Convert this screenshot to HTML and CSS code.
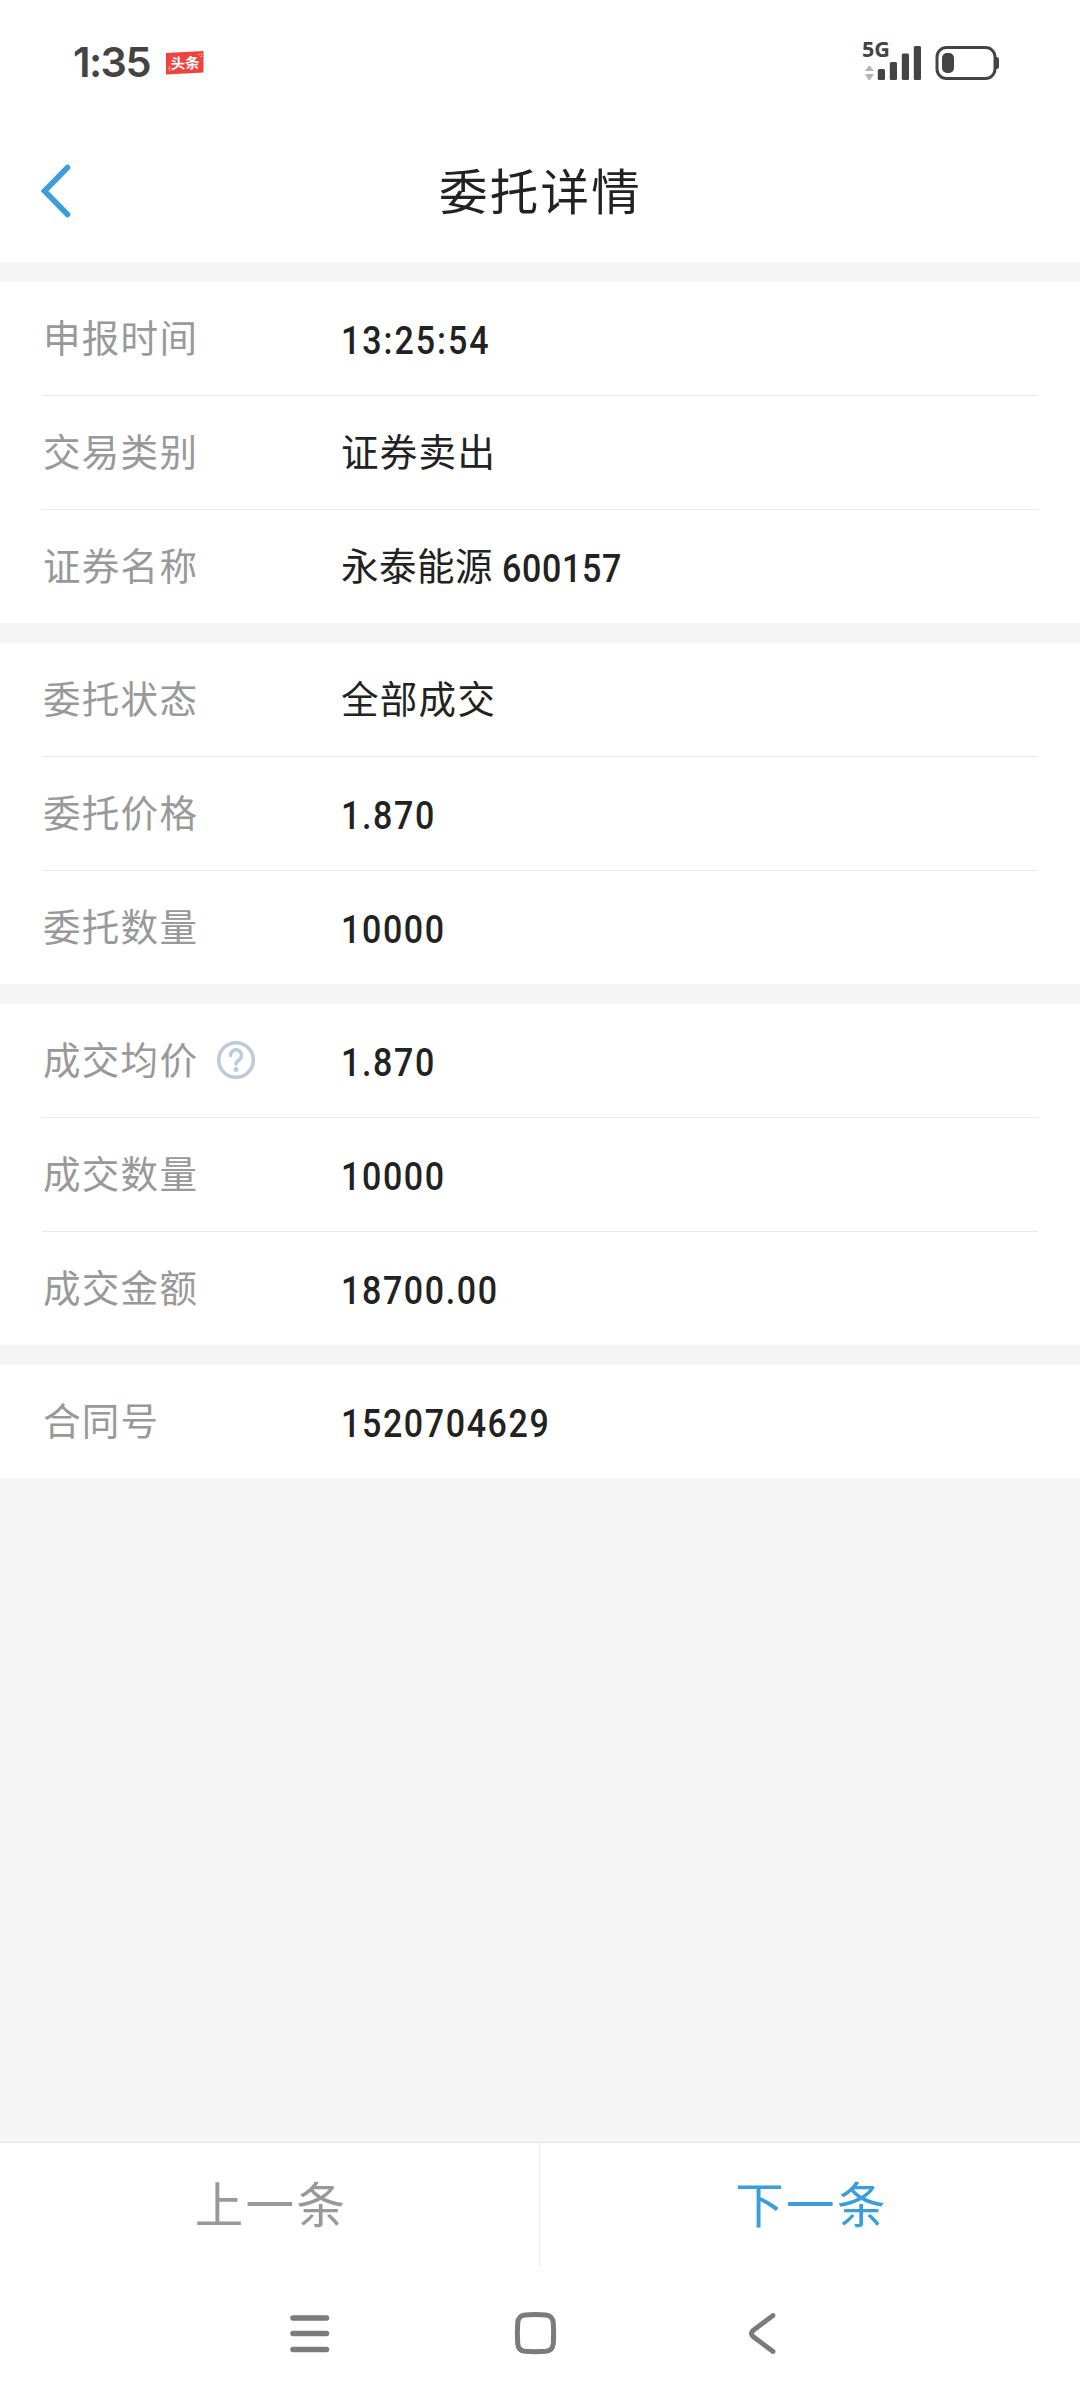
FILE: index.html
```html
<!DOCTYPE html>
<html lang="zh-CN">
<head>
<meta charset="utf-8">
<title>委托详情</title>
<link rel="stylesheet" href="styles.css">
</head>
<body>
<div class="screen">
  <div class="status">
    <span class="clock">1:35</span>
    <svg class="news" width="38" height="24" viewBox="0 0 38 24">
      <path d="M0 2 37.500 0V21.500L0 23.500Z" fill="#f04340"/>
      <path d="M32 3l2 1M34 6l2-1M35 2l1 2M2 17l2 1M3 20l2-1M3 15l1 2" stroke="#f9a07a" stroke-width="1.200"/>
      <text class="news-text" x="4.500" y="17.500" transform="rotate(-2 18 12)">头条</text>
    </svg>
    <svg class="signal" width="66" height="48" viewBox="-4 -2 66 48">
      <text class="signal-text" x="0" y="19" textLength="28" lengthAdjust="spacingAndGlyphs">5G</text>
      <path d="M3 33 6.500 28h1.500L12 33ZM3 36h9L8 42H6.500Z" fill="#b5b5b5"/>
      <g fill="#444">
        <rect x="15.800" y="31" width="7.200" height="11" rx="1.500"/>
        <rect x="27.800" y="24" width="7.200" height="18" rx="1.500"/>
        <rect x="39.800" y="15.500" width="7.200" height="26.500" rx="1.500"/>
        <rect x="51.800" y="8" width="7.200" height="34" rx="1.500"/>
      </g>
    </svg>
    <svg class="battery" width="66" height="36" viewBox="0 0 66 36">
      <rect x="2" y="2.500" width="58" height="31" rx="9.500" fill="none" stroke="#444" stroke-width="3"/>
      <rect x="7" y="8" width="12" height="20" rx="5" fill="#444"/>
      <path d="M60 12h1.500q2.500 0 2.500 2.500v7q0 2.500-2.500 2.500H60Z" fill="#444"/>
    </svg>
  </div>
  <header class="header">
    <svg class="back" width="34" height="56" viewBox="0 0 34 56">
      <path d="M29.500 4.500 6.500 28 29.500 51.500" fill="none" stroke="#3a9ddd" stroke-width="5.500" stroke-linecap="round"/>
    </svg>
    <h1 class="title">委托详情</h1>
  </header>
  <main class="content">
    <section class="group">
      <div class="row"><span class="label">申报时间</span><span class="num time">13:25:54</span></div>
      <div class="row"><span class="label">交易类别</span><span class="value">证券卖出</span></div>
      <div class="row"><span class="label">证券名称</span><span class="value name">永泰能源</span><span class="num code">600157</span></div>
    </section>
    <section class="group">
      <div class="row"><span class="label">委托状态</span><span class="value">全部成交</span></div>
      <div class="row"><span class="label">委托价格</span><span class="num">1.870</span></div>
      <div class="row"><span class="label">委托数量</span><span class="num">10000</span></div>
    </section>
    <section class="group">
      <div class="row"><span class="label">成交均价<svg class="help" width="40" height="40" viewBox="0 0 40 40">
        <circle cx="20" cy="20" r="17.300" fill="none" stroke="#bccbda" stroke-width="3.500"/>
        <path d="M14.500 15.500a5.500 5.500 0 1 1 8.500 4.500q-3 2-3 4" fill="none" stroke="#bccbda" stroke-width="3.500" stroke-linecap="round"/>
        <circle cx="20" cy="29.500" r="2.400" fill="#bccbda"/>
      </svg></span><span class="num">1.870</span></div>
      <div class="row"><span class="label">成交数量</span><span class="num">10000</span></div>
      <div class="row"><span class="label">成交金额</span><span class="num">18700.00</span></div>
    </section>
    <section class="group">
      <div class="row"><span class="label">合同号</span><span class="num">1520704629</span></div>
    </section>
  </main>
  <footer class="pager">
    <div class="page prev">上一条</div>
    <div class="page next">下一条</div>
  </footer>
  <nav class="nav">
    <svg width="540" height="56" viewBox="260 2305 540 56" fill="none" stroke="#7b7b7b" stroke-width="5.500" stroke-linecap="round" stroke-linejoin="round">
      <path d="M293 2318h33.500M293 2333.500h33.500M293 2349.500h33.500"/>
      <path d="M525 2315Q535.500 2314.200 546 2315Q552.500 2315.500 553.300 2323Q554 2333.500 553.300 2343.500Q552.500 2350.700 546 2351.300Q535.500 2352 525 2351.300Q518.300 2350.700 517.700 2343.500Q517 2333.500 517.700 2323Q518.300 2315.500 525 2315Z" stroke-width="5"/>
      <path d="M773 2315.500 753 2330.500Q750 2333.500 753 2336.500L773 2351.500" stroke-width="4.800"/>
    </svg>
  </nav>
</div>
</body>
</html>
```
FILE: styles.css
```css
* { box-sizing: border-box; }

body {
  margin: 0;
  background: #fff;
  font-family: "Noto Sans CJK SC", sans-serif;
  color: #222;
}

svg { display: block; flex: none; }

.screen {
  display: flex;
  flex-direction: column;
  width: 1080px;
  height: 2400px;
}

.status {
  display: flex;
  align-items: center;
  height: 127px;
  padding: 0 79px 1px 73px;
  color: #444;
}

.clock {
  width: 93px;
  font: 600 41.500px/1 Inter, sans-serif;
  letter-spacing: -1.600px;
}

.news-text {
  font: 700 14.500px "Noto Sans CJK SC", sans-serif;
  fill: #fff;
}

.signal { margin: -6px 11px 0 auto; }

.signal-text {
  font: 700 20.500px "Open Sans", sans-serif;
  fill: #444;
}

.header {
  display: grid;
  grid-template-columns: 72px 1fr 72px;
  align-items: center;
  height: 135px;
  padding-bottom: 11px;
}

.back { justify-self: end; margin-top: 4px; }

.title {
  margin: 0;
  padding-left: 1px;
  text-align: center;
  font-size: 48.500px;
  font-weight: 400;
  letter-spacing: 2.200px;
  line-height: 60px;
}

.content {
  display: flex;
  flex: 1;
  flex-direction: column;
  gap: 20px;
  padding-top: 20px;
  background: #f5f5f5;
}

.group {
  padding: 0 42px;
  background: #fff;
}

.row {
  display: flex;
  align-items: center;
  height: 113px;
  padding-bottom: 5px;
  font-size: 37.500px;
  letter-spacing: 1.300px;
  line-height: 54px;
}

.row + .row {
  height: 114px;
  border-top: 1px solid #e9e9e9;
}

.label {
  display: flex;
  align-items: center;
  gap: 18px;
  width: 299px;
  padding-left: 1px;
  color: #999;
}

.help { margin-top: 3px; }

.name { letter-spacing: 0.500px; margin-right: 9px; }

.num {
  padding-top: 9px;
  font-family: Roboto, sans-serif;
  font-size: 39.500px;
  font-weight: 500;
  letter-spacing: 1.900px;
  transform: scaleX(0.86);
  transform-origin: left center;
}

.time { letter-spacing: 2.300px; }
.code { letter-spacing: 0.800px; }

.pager {
  display: flex;
  height: 125px;
  border-top: 1px solid #e5e5e5;
}

.page {
  width: 540px;
  padding-left: 3px;
  text-align: center;
  font-size: 48.500px;
  letter-spacing: 2.300px;
  line-height: 118px;
}

.prev { border-right: 1px solid #ebebeb; color: #999; }
.next { color: #3a9ddd; }

.nav {
  height: 133px;
  padding: 38px 0 0 260px;
}
```
